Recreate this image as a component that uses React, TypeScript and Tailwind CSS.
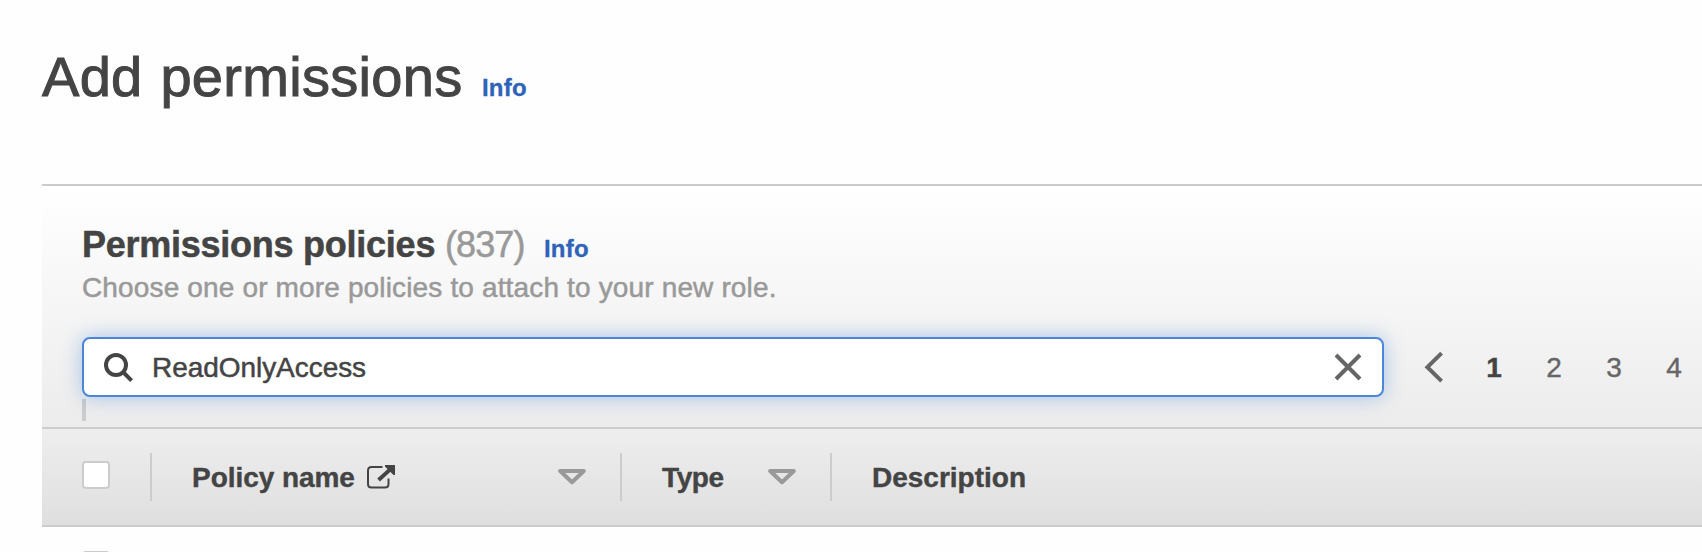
import React from "react";

function SearchIcon() {
  return (
    <svg className="block shrink-0" width="32" height="32" viewBox="0 0 32 32" fill="none" stroke="#444" strokeWidth="4">
      <circle cx="14" cy="14" r="10" />
      <path d="M21 21 L29.6 29.6" />
    </svg>
  );
}

function ClearIcon() {
  return (
    <svg className="block shrink-0" width="28" height="28" viewBox="0 0 28 28" fill="none" stroke="#666" strokeWidth="4">
      <path d="M2 2 L26 26 M26 2 L2 26" />
    </svg>
  );
}

function ChevronIcon() {
  return (
    <svg className="block shrink-0" width="20" height="32" viewBox="0 0 20 32" fill="none" stroke="#666" strokeWidth="4">
      <path d="M17.6 2.2 L3.4 16.2 L17.6 30.2" />
    </svg>
  );
}

function ExternalIcon() {
  return (
    <svg className="block shrink-0" width="30" height="26" viewBox="0 0 30 26" fill="none" stroke="#444">
      <path d="M16.5 3 H5.5 Q2 3 2 6.5 V20 Q2 23.5 5.5 23.5 H19 Q22.5 23.5 22.5 20 V14.5" strokeWidth="2" />
      <path d="M12.6 16 L25 4.6" strokeWidth="4" />
      <path d="M19 1 H29 V11 H27.5 L19 2.6 Z" fill="#444" stroke="none" />
    </svg>
  );
}

function SortIcon() {
  return (
    <svg className="block shrink-0" width="28" height="18" viewBox="0 0 28 18" fill="none" stroke="#999" strokeWidth="4" strokeLinejoin="round">
      <path d="M2.2 3 H25.8 L14 14.2 Z" />
    </svg>
  );
}

function Divider() {
  return <span className="h-12 w-0.5 shrink-0 bg-[#ccc]" />;
}

function Checkbox() {
  return <span className="block h-7 w-7 shrink-0 rounded-[4px] border-2 border-[#ccc] bg-white" />;
}

const pages = ["1", "2", "3", "4"];

export default function App() {
  return (
    <main className="h-[552px] w-[1702px] overflow-hidden bg-[#fefefe] pl-[42px] font-['Liberation_Sans',Arial,sans-serif] text-[#444]">
      <header className="flex h-[184px] items-baseline pt-[45px] whitespace-nowrap">
        <h1 className="w-[440px] text-[56px] leading-[64px] tracking-[0.3px] [word-spacing:2px] [-webkit-text-stroke:1px_#444]">Add permissions</h1>
        <a className="text-[24px] leading-[28px] font-bold tracking-[0.2px] text-[#2e63b8] [-webkit-text-stroke:0.3px_#2e63b8]">Info</a>
      </header>

      <section className="h-[245px] border-y-2 border-[#ccc] bg-linear-to-b from-white to-[#ececec] pl-10 whitespace-nowrap">
        <div className="flex h-[81px] items-baseline pt-[38px]">
          <h2 className="w-[363px] text-[36px] leading-[42px] font-bold tracking-[-0.25px] [-webkit-text-stroke:0.5px_#444]">Permissions policies</h2>
          <span className="w-[99px] text-[36px] leading-[42px] tracking-[-0.9px] text-[#999] [-webkit-text-stroke:0.5px_#999]">(837)</span>
          <a className="text-[24px] leading-[28px] font-bold tracking-[0.2px] text-[#2e63b8] [-webkit-text-stroke:0.3px_#2e63b8]">Info</a>
        </div>
        <p className="h-[70px] pt-[5px] text-[28px] leading-8 tracking-[0.15px] text-[#999] [-webkit-text-stroke:0.5px_#999]">Choose one or more policies to attach to your new role.</p>
        <div className="flex items-center">
          <div className="flex h-[60px] w-[1302px] shrink-0 items-center rounded-[8px] border-2 border-[#4a87d9] bg-white pr-5 pl-[18px] shadow-[0_0_20px_rgba(74,135,217,0.45)]">
            <SearchIcon />
            <span className="ml-[18px] flex-1 pt-0.5 text-[28px] leading-8 tracking-[-0.05px] [-webkit-text-stroke:0.5px_#444]">ReadOnlyAccess</span>
            <ClearIcon />
          </div>
          <div className="ml-10 flex items-center">
            <ChevronIcon />
            <div className="ml-[20px] flex pt-0.5 text-[28px] leading-8 text-[#666] [-webkit-text-stroke:0.4px]">
              {pages.map((page, index) => (
                <span key={page} className={index === 0 ? "w-[60px] text-center font-bold text-[#444]" : "w-[60px] text-center"}>{page}</span>
              ))}
            </div>
          </div>
        </div>
        <div className="mt-0.5 h-[22px] w-1 bg-[#ccc]" />
      </section>

      <div className="flex h-[98px] items-center border-b-2 border-[#ccc] bg-linear-to-b from-[#eee] to-[#dfdfdf] pl-10 text-[28px] leading-8 font-bold whitespace-nowrap">
        <div className="-mt-1 flex w-[68px]"><Checkbox /></div>
        <Divider />
        <div className="flex w-[468px] items-center pr-[34px] pl-10">
          <span className="w-[174px] pt-0.5 tracking-[-0.05px] [-webkit-text-stroke:0.4px_#444]">Policy name</span>
          <ExternalIcon />
          <span className="flex-1" />
          <SortIcon />
        </div>
        <Divider />
        <div className="flex w-[208px] items-center justify-between pr-[34px] pl-10">
          <span className="pt-0.5 tracking-[-0.4px] [-webkit-text-stroke:0.4px_#444]">Type</span>
          <SortIcon />
        </div>
        <Divider />
        <span className="pt-0.5 pl-10 [-webkit-text-stroke:0.4px_#444]">Description</span>
      </div>

      <div className="pt-6 pl-10"><Checkbox /></div>
    </main>
  );
}
